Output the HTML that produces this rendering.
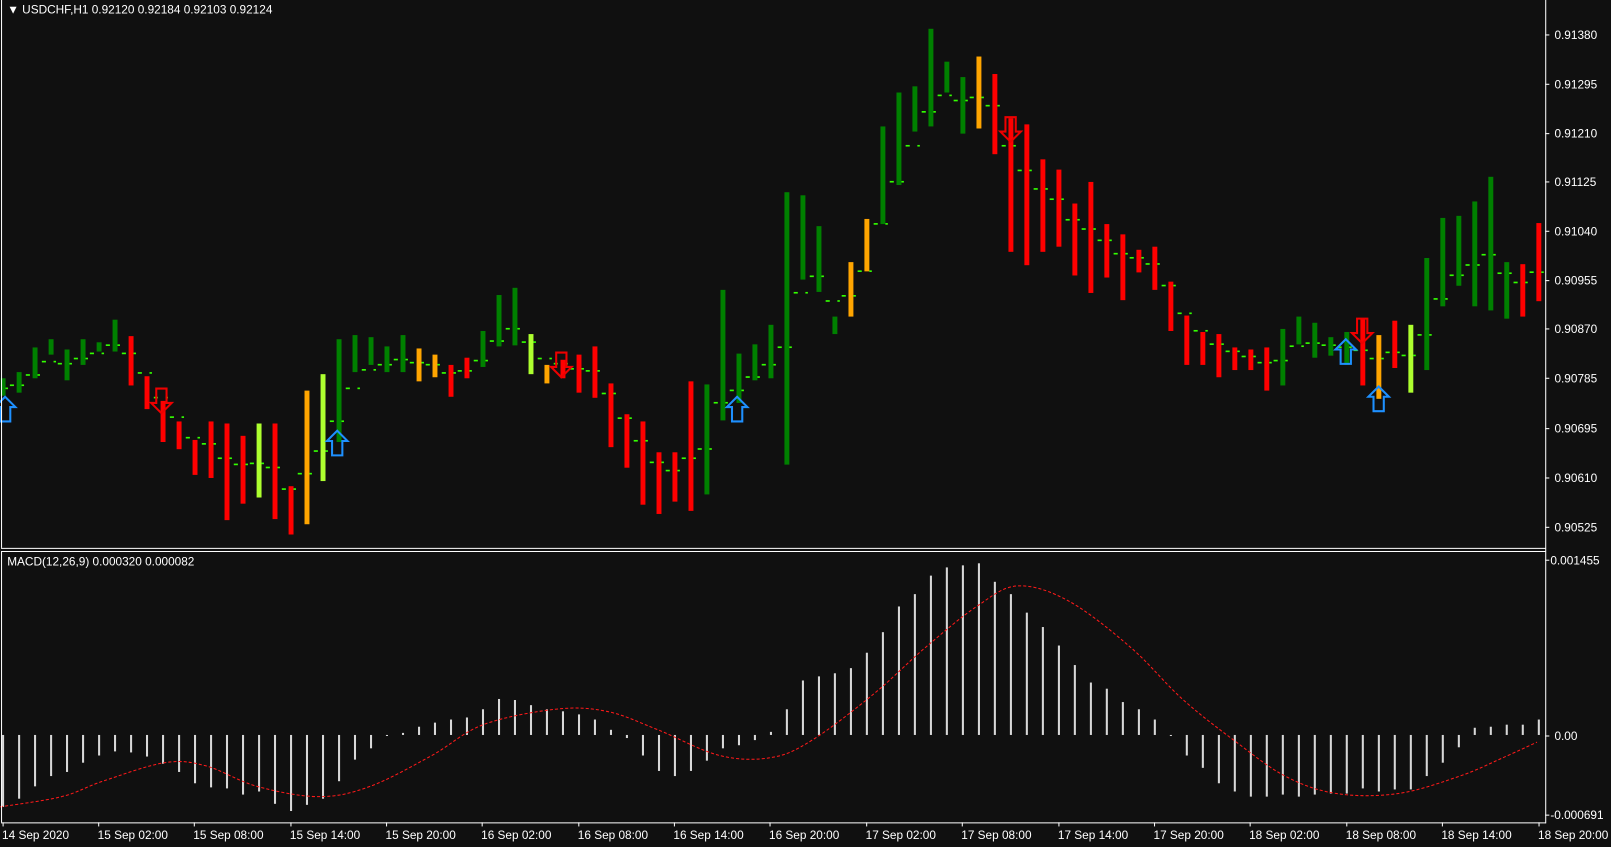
<!DOCTYPE html>
<html><head><meta charset="utf-8"><style>
html,body{margin:0;padding:0;background:#101010;overflow:hidden}
svg{display:block}
text{font-family:"Liberation Sans",sans-serif;font-size:11.5px;fill:#fff}
</style></head><body>
<svg id="s" width="1611" height="847" viewBox="0 0 1567 824" preserveAspectRatio="none" xmlns="http://www.w3.org/2000/svg">
<rect x="0" y="0" width="1567" height="824" fill="#101010"/>
<g id="bars"></g>
<g stroke="#fff" stroke-width="1" fill="none">
<line x1="1503.5" y1="0" x2="1503.5" y2="801"/>
<line x1="1" y1="533.5" x2="1503.5" y2="533.5"/>
<line x1="1" y1="536.5" x2="1503.5" y2="536.5"/>
<line x1="1" y1="800.5" x2="1503.5" y2="800.5"/>
<line x1="1.5" y1="0" x2="1.5" y2="533"/>
<line x1="1.5" y1="536" x2="1.5" y2="800"/>
</g>
<g id="ticks" stroke="#fff"></g>
<text x="7" y="13">▼ USDCHF,H1  0.92120 0.92184 0.92103 0.92124</text>
<text x="7" y="550">MACD(12,26,9) 0.000320 0.000082</text>
<g>
<text x="1512" y="38">0.91380</text><text x="1512" y="86">0.91295</text><text x="1512" y="134">0.91210</text><text x="1512" y="181">0.91125</text><text x="1512" y="229">0.91040</text><text x="1512" y="277">0.90955</text><text x="1512" y="324">0.90870</text><text x="1512" y="372">0.90785</text><text x="1512" y="421">0.90695</text><text x="1512" y="469">0.90610</text><text x="1512" y="517">0.90525</text>
<text x="1508" y="549">0.001455</text><text x="1512" y="720">0.00</text><text x="1508" y="797">-0.000691</text>
</g>
<g>
<text x="2" y="816">14 Sep 2020</text><text x="95" y="816">15 Sep 02:00</text><text x="188" y="816">15 Sep 08:00</text><text x="282" y="816">15 Sep 14:00</text><text x="375" y="816">15 Sep 20:00</text><text x="468" y="816">16 Sep 02:00</text><text x="562" y="816">16 Sep 08:00</text><text x="655" y="816">16 Sep 14:00</text><text x="748" y="816">16 Sep 20:00</text><text x="842" y="816">17 Sep 02:00</text><text x="935" y="816">17 Sep 08:00</text><text x="1029" y="816">17 Sep 14:00</text><text x="1122" y="816">17 Sep 20:00</text><text x="1215" y="816">18 Sep 02:00</text><text x="1309" y="816">18 Sep 08:00</text><text x="1402" y="816">18 Sep 14:00</text><text x="1496" y="816">18 Sep 20:00</text>
</g>
</svg>
<script>
var G='#008000',R='#ff0000',O='#ffa500',Y='#adff2f';
var b=[[G,368,385],[G,362,382],[G,338,368],[G,330,345],[G,340,370],[G,330,355],[G,333,342],[G,311,342],[R,327,375],[R,366,398],
[R,390,430],[R,410,437],[R,428,462],[R,410,465],[R,412,506],[R,424,490],[Y,412,484],[R,412,505],[R,473,520],[O,380,510],
[Y,364,468],[G,330,430],[G,326,362],[G,328,355],[G,337,362],[G,326,362],[O,339,371],[O,345,367],[R,355,386],[R,348,368],
[G,322,357],[G,287,337],[G,280,336],[Y,325,364],[O,355,373],[R,350,368],[R,345,382],[R,337,387],[R,373,435],[R,403,455],
[R,410,491],[R,440,500],[R,440,488],[R,371,497],[G,374,481],[G,282,409],[G,344,392],[G,335,370],[G,316,368],[G,187,452],
[G,190,272],[G,220,284],[G,308,325],[O,255,308],[O,213,264],[G,123,218],[G,90,180],[G,84,128],[G,28,123],[G,60,90],
[G,75,130],[O,55,125],[R,72,150],[R,115,245],[R,121,258],[R,155,245],[R,165,240],[R,198,268],[R,177,285],[R,218,270],
[R,228,292],[R,243,265],[R,240,282],[R,274,322],[R,307,355],[R,323,355],[R,325,367],[R,338,360],[R,340,360],[R,338,380],
[G,320,375],[G,308,335],[G,314,348],[G,328,346],[G,323,355],[R,310,375],[O,326,388],[R,312,358],[Y,316,382],[G,251,360],
[G,212,298],[G,210,278],[G,196,298],[G,172,302],[G,255,310],[R,257,308],[R,217,293]];
var m=[785,777,765,755,751,742,735,731,732,736,743,751,762,766,767,773,770,782,789,783,777,760,739,728,716,713,707,703,700,698,
690,680,681,686,690,692,695,700,710,718,735,750,755,750,740,728,725,720,712,690,662,658,655,650,635,615,590,578,560,552,
550,548,566,578,596,610,628,647,664,670,683,690,700,715,735,747,762,770,775,775,773,775,773,772,772,767,770,768,768,755,
742,727,708,707,705,705,700];
var sg=[[0,785],[60,775],[100,760],[160,742],[200,745],[250,765],[310,775],[360,765],[420,735],[470,705],[540,690],[590,692],[640,710],[700,735],[750,737],[790,720],[850,675],[900,630],[950,590],[990,570],[1040,585],[1100,630],[1150,680],[1200,720],[1250,755],[1300,772],[1360,772],[1420,755],[1460,738],[1495,722]];
var h='',ma=(b[0][1]+b[0][2])/2;
for(var i=0;i<b.length;i++){var x=3+15.56*i,c=b[i];
h+='<rect x="'+(x-2.4).toFixed(1)+'" y="'+c[1]+'" width="4.8" height="'+(c[2]-c[1])+'" fill="'+c[0]+'"/>';
var mid=(c[1]+c[2])/2;ma=ma*0.5+mid*0.5;var ty=Math.round(ma);
h+='<rect x="'+(x-9).toFixed(1)+'" y="'+ty+'" width="4" height="1.6" fill="#33ff00"/><rect x="'+(x+2.4).toFixed(1)+'" y="'+ty+'" width="2.4" height="1.6" fill="#33ff00"/>';
var v=m[i];var y1=Math.min(715,v),y2=Math.max(715,v);
h+='<rect x="'+(x-1).toFixed(1)+'" y="'+y1+'" width="2" height="'+Math.max(1,y2-y1)+'" fill="#d8d8d8"/>';}
var d='M'+sg[0][0]+' '+sg[0][1];
for(var k=0;k<sg.length-1;k++){var p0=sg[Math.max(0,k-1)],p1=sg[k],p2=sg[k+1],p3=sg[Math.min(sg.length-1,k+2)];
d+=' C'+(p1[0]+(p2[0]-p0[0])/6).toFixed(1)+' '+(p1[1]+(p2[1]-p0[1])/6).toFixed(1)+' '+(p2[0]-(p3[0]-p1[0])/6).toFixed(1)+' '+(p2[1]-(p3[1]-p1[1])/6).toFixed(1)+' '+p2[0]+' '+p2[1];}
h+='<path d="'+d+'" fill="none" stroke="#ff1a1a" stroke-width="1" stroke-dasharray="3 2"/>';
function up(x,y){return '<path d="M'+x+' '+y+' l-10 10 h5 v14 h10 v-14 h5 z" fill="none" stroke="#1e90ff" stroke-width="2"/>';}
function dn(x,y){return '<path d="M'+(x-5)+' '+y+' h10 v14 h5 l-10 10 l-10 -10 h5 z" fill="none" stroke="#ee0000" stroke-width="2"/>';}
h+=up(5,386)+up(328,419)+up(717,386)+up(1309,330)+up(1341,376);
h+=dn(157,378)+dn(546,343)+dn(983,114)+dn(1325,310);
document.getElementById('bars').innerHTML=h;
var t='';
[34,82,130,177,225,273,320,368,417,465,513,545,716,793].forEach(y=>{t+='<line x1="1503" y1="'+y+'" x2="1507" y2="'+y+'"/>';});
[2,95,188,282,375,468,562,655,748,842,935,1029,1122,1215,1309,1402,1496].forEach(x=>{t+='<line x1="'+(x+1)+'" y1="800" x2="'+(x+1)+'" y2="804"/>';});
document.getElementById('ticks').innerHTML=t;
</script>
</body></html>
